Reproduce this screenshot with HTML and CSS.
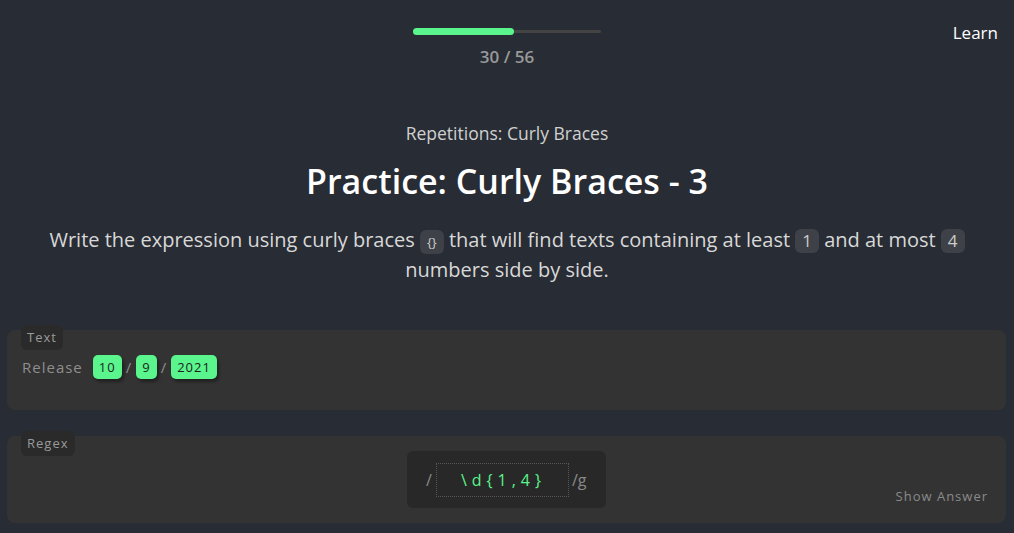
FILE: index.html
```html
<!DOCTYPE html>
<html>
<head>
<meta charset="utf-8">
<link rel="stylesheet" href="styles.css">
</head>
<body>
<header class="top">
  <div class="progress-wrap">
    <div class="progress"><div class="progress-fill" style="width:53.6%"></div></div>
    <div class="count">30 / 56</div>
  </div>
  <a class="learn">Learn</a>
</header>
<main class="content">
  <div class="subtitle">Repetitions: Curly Braces</div>
  <h1 class="title">Practice: Curly Braces - 3</h1>
  <p class="desc">Write the expression using curly braces <code class="kbd">{}</code> that will find texts containing at least <code class="kbd num">1</code> and at most <code class="kbd num">4</code> numbers side by side.</p>
</main>
<section class="panel text-panel">
  <span class="label">Text</span>
  <div class="sample">Release <span class="sp"></span><mark class="hit">10</mark><span class="sep">/</span><mark class="hit">9</mark><span class="sep">/</span><mark class="hit">2021</mark></div>
</section>
<section class="panel regex-panel">
  <span class="label">Regex</span>
  <div class="regex-box">
    <span class="slash">/</span>
    <div class="input">\d{1,4}</div>
    <span class="flags">/g</span>
  </div>
  <a class="show">Show Answer</a>
</section>
</body>
</html>
```
FILE: styles.css
```css
html, body { margin: 0; padding: 0; }
body {
  background: #282c34;
  font-family: "Open Sans", "Noto Sans", sans-serif;
  color: #fff;
  width: 1014px;
  height: 533px;
  overflow: hidden;
}
.top {
  position: relative;
  display: flex;
  justify-content: center;
  padding-top: 30px;
  height: 50px;
}
.progress-wrap { display: flex; flex-direction: column; align-items: center; }
.progress {
  width: 188px;
  height: 3px;
  background: #444;
  border-radius: 3px;
  position: relative;
}
.progress-fill {
  position: absolute;
  left: 0; top: -2px;
  height: 7px;
  background: #5af58c;
  border-radius: 4px;
}
.count {
  margin-top: 13px;
  font-size: 17px;
  font-weight: 600;
  color: #9a9a9a;
  line-height: 22px;
}
.learn {
  position: absolute;
  right: 16px;
  top: 21px;
  font-size: 17px;
  color: #fff;
  line-height: 24px;
}
.content {
  text-align: center;
  padding: 0 20px;
  margin-top: 42px;
}
.subtitle {
  font-size: 17.5px;
  color: #d0d0d0;
  line-height: 22px;
}
.title {
  margin: 12px 0 0;
  font-size: 34px;
  font-weight: 600;
  line-height: 50px;
  color: #fff;
}
.desc {
  margin: 19px auto 0;
  width: 960px;
  font-size: 20px;
  line-height: 30px;
  color: #d8d8d8;
}
.kbd {
  display: inline-block;
  font-family: "Open Sans", sans-serif;
  background: #3e4148;
  color: #ccc;
  font-size: 13px;
  line-height: 24px;
  height: 24px;
  padding: 0 7px;
  border-radius: 6px;
  vertical-align: 0px;
}
.kbd.num { font-size: 17px; padding: 0 7px; }
.panel {
  position: relative;
  margin: 0 8px 0 7px;
  background: #333333;
  border-radius: 8px;
}
.text-panel { margin-top: 45px; height: 80px; }
.regex-panel { margin-top: 26px; height: 87px; }
.label {
  position: absolute;
  left: 14px;
  top: -5px;
  background: #2a2a2a;
  color: #9a9a9a;
  font-size: 13px;
  letter-spacing: 1px;
  line-height: 20px;
  padding: 2px 6px 3px;
  border-radius: 6px;
}
.sample {
  padding: 25px 0 0 15px;
  font-size: 15px;
  letter-spacing: 1px;
  color: #8e8e8e;
  display: flex;
  align-items: center;
}
.sp { width: 10px; }
.hit {
  background: #5af58c;
  color: #1e1e1e;
  font-size: 13px;
  letter-spacing: 1px;
  padding: 0 6px;
  border-radius: 5px;
  line-height: 24px;
  box-shadow: 2px 3px 3px rgba(0,0,0,0.35);
}
.sep { margin: 0 4px; color: #8e8e8e; }
.regex-box {
  position: absolute;
  left: 400px;
  top: 15px;
  width: 199px;
  height: 57px;
  background: #282828;
  border-radius: 6px;
  display: flex;
  align-items: center;
  box-sizing: border-box;
  padding-left: 19px;
}
.slash, .flags { color: #888; font-size: 16px; }
.input {
  margin-left: 4px;
  width: 133px;
  height: 34px;
  box-sizing: border-box;
  border: 1px dotted #555;
  color: #5af58c;
  font-size: 16px;
  letter-spacing: 5px;
  line-height: 32px;
  padding-left: 24px;
  font-family: "Open Sans", sans-serif;
}
.flags { margin-left: 3px; }
.show {
  position: absolute;
  right: 18px;
  top: 51px;
  font-size: 13px;
  letter-spacing: 1px;
  color: #8a8a8a;
}
```
